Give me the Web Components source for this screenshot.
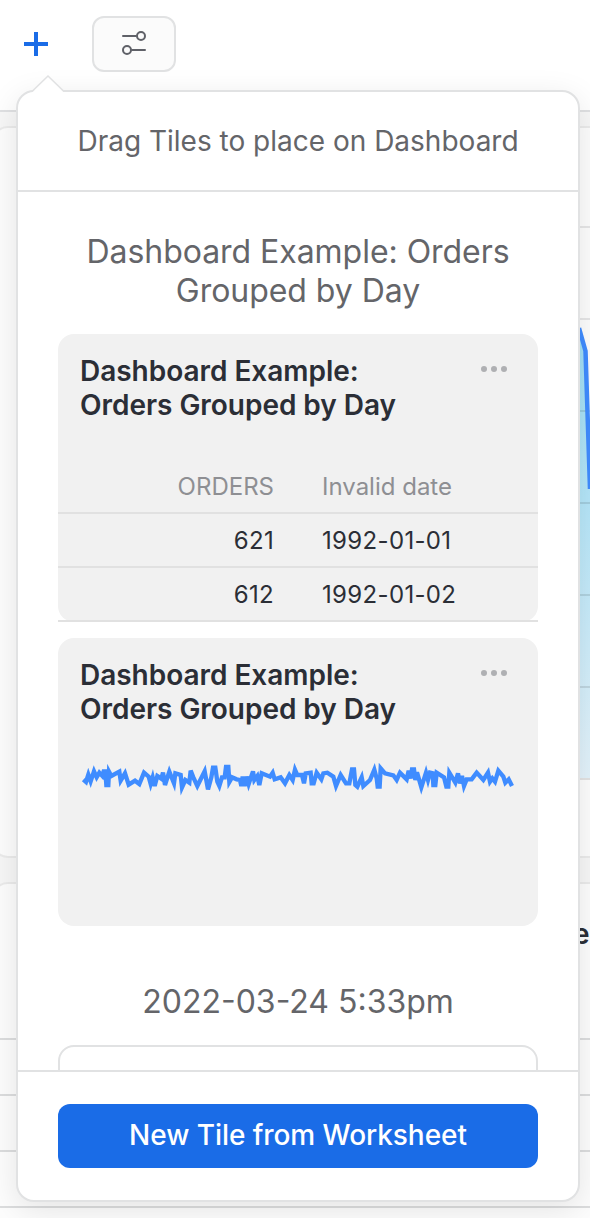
<!DOCTYPE html>
<html lang="en">
<head>
<meta charset="utf-8">
<title>Dashboard</title>
<style>
html,body{margin:0;height:1218px;overflow:hidden;background:#fff}
body{font-family:Inter,"Liberation Sans",sans-serif;color:#2b2e36}
</style>
</head>
<body>
<dash-page>
  <dash-toolbar slot="toolbar"></dash-toolbar>
  <chart-card></chart-card>
  <table-card>e</table-card>
  <tile-popover slot="overlay">
    <span slot="heading">Drag Tiles to place on Dashboard</span>
    <tile-group>
      <span slot="name">Dashboard Example: Orders<br>Grouped by Day</span>
      <dash-tile>
        <span slot="title">Dashboard Example:<br>Orders Grouped by Day</span>
        <mini-table></mini-table>
      </dash-tile>
      <dash-tile>
        <span slot="title">Dashboard Example:<br>Orders Grouped by Day</span>
        <spark-line></spark-line>
      </dash-tile>
    </tile-group>
    <tile-group class="second">
      <span slot="name">2022-03-24 5:33pm</span>
      <empty-tile></empty-tile>
    </tile-group>
    <primary-button slot="footer">New Tile from Worksheet</primary-button>
  </tile-popover>
</dash-page>
<script>
const define = (name, html) => customElements.define(name, class extends HTMLElement {
  constructor() {
    super();
    this.attachShadow({mode: 'open'}).innerHTML = html;
  }
});

define('dash-page', `
<style>
:host{display:flex;flex-direction:column;position:relative;width:590px;height:1218px;overflow:hidden;background:#fff}
main{flex:1;display:flex;flex-direction:column;gap:24px;padding-top:14px;background:#f7f7f7;min-height:0}
</style>
<slot name="toolbar"></slot><main><slot></slot></main><slot name="overlay"></slot>`);

define('dash-toolbar', `
<style>
:host{display:flex;box-sizing:border-box;height:112px;flex:none;border-bottom:2px solid #dfe0e2;padding:16px 0 0 24px;gap:44px;align-items:flex-start}
.add{width:24px;height:24px;margin-top:16px;display:block}
.filter{box-sizing:border-box;width:84px;height:56px;border:2px solid #e1e2e3;border-radius:12px;background:#fbfbfb;display:flex;align-items:center;justify-content:center}
.filter svg{margin-top:-2px}
</style>
<svg class="add" viewBox="0 0 24 24"><path d="M12 0V24M0 12H24" stroke="#1a6ce7" stroke-width="4"/></svg>
<div class="filter"><svg width="24" height="26" viewBox="0 0 24 26" fill="none" stroke="#5f6168" stroke-width="2" stroke-linecap="round"><path d="M1 6H14M10 20H23"/><circle cx="19" cy="6" r="4"/><circle cx="5" cy="20" r="4"/></svg></div>`);

define('chart-card', `
<style>
:host{display:flex;justify-content:flex-end;box-sizing:border-box;height:732px;flex:none;margin:0 -20px 0 -8px;padding-right:18px;border:2px solid #ebebeb;border-radius:16px;background:#fdfdfd}
svg{display:block}
</style>
<svg width="20" height="728" viewBox="570 128 20 728">
<defs><linearGradient id="g" x1="0" y1="328" x2="0" y2="778" gradientUnits="userSpaceOnUse"><stop offset="0" stop-color="#9fdef5"/><stop offset=".38" stop-color="#b5e6f9"/><stop offset="1" stop-color="#e4f3fb"/></linearGradient></defs>
<path d="M570 227H590M570 319H590" stroke="#e6e6e7" stroke-width="2"/>
<path d="M578 778V325L586 350L590 490V778Z" fill="url(#g)"/>
<path d="M570 411H590M570 503H590M570 595H590M570 687H590M570 779H590" stroke="#000" stroke-opacity=".1" stroke-width="2"/>
<path d="M579 328L585.500 351L590 489" fill="none" stroke="#3f8cff" stroke-width="4.500"/>
</svg>`);

define('table-card', `
<style>
:host{display:flex;flex-direction:column;box-sizing:border-box;height:400px;flex:none;margin:0 -20px 0 -8px;border:2px solid #ebebeb;border-radius:16px;background:#fdfdfd}
h2{margin:0;box-sizing:border-box;height:154px;padding:33px 0 0 579px;font-size:28px;line-height:34px;font-weight:600}
i{display:block;box-sizing:border-box;height:56px;border-top:2px solid #dcddde}
</style>
<h2><slot></slot></h2><i></i><i></i><i></i><i></i>`);

define('tile-popover', `
<style>
:host{position:absolute;left:16px;top:90px;width:564px;height:1112px;box-sizing:border-box;border:2px solid #e1e2e3;border-radius:18px;background:#fff;display:flex;flex-direction:column;box-shadow:0 8px 32px rgba(0,0,0,.1)}
.arrow{position:absolute;left:12px;top:-18px}
header{box-sizing:border-box;height:100px;flex:none;border-bottom:2px solid #e1e2e3;text-align:center;font-size:28px;line-height:98px;color:#646569}
main{flex:1;min-height:0;overflow:hidden;padding:40px 40px 0}
footer{box-sizing:border-box;height:130px;flex:none;border-top:2px solid #e1e2e3;padding:32px 40px}
</style>
<svg class="arrow" width="36" height="20" viewBox="0 0 36 20"><path d="M2 18.500L18 2.500L34 18.500V20H2Z" fill="#fff"/><path d="M2 17.500L18 2L34 17.500" fill="none" stroke="#e1e2e3" stroke-width="1.500"/></svg>
<header><slot name="heading"></slot></header><main><slot></slot></main><footer><slot name="footer"></slot></footer>`);

define('tile-group', `
<style>
:host{display:flex;flex-direction:column;gap:16px}
:host(.second){margin-top:56px}
.name{text-align:center;font-size:32px;line-height:39px;letter-spacing:-.04px;color:#646569;margin-bottom:8px}
:host(.second) .name{letter-spacing:0}
</style>
<div class="name"><slot name="name"></slot></div><slot></slot>`);

define('dash-tile', `
<style>
:host{display:flex;flex-direction:column;box-sizing:border-box;height:288px;background:#f1f1f1;border-radius:16px}
.head{display:flex;justify-content:space-between;padding:20px 30px 0 22px;height:102px;flex:none;box-sizing:border-box}
.title{font-size:28px;line-height:34px;font-weight:600;letter-spacing:-.03px;color:#2b2e36}
svg{margin-top:12px}
</style>
<div class="head"><div class="title"><slot name="title"></slot></div>
<svg width="28" height="6" viewBox="0 0 28 6" fill="#afb0b3"><circle cx="4" cy="3" r="3"/><circle cx="14" cy="3" r="3"/><circle cx="24" cy="3" r="3"/></svg></div><slot></slot>`);

define('mini-table', `
<style>
:host{display:block;padding-top:24px;font-size:24px;color:#2b2e36}
.row{display:grid;grid-template-columns:216px 1fr;column-gap:48px;box-sizing:border-box;height:54px;line-height:54px;letter-spacing:.34px;border-bottom:2px solid #e1e1e1}
.row>:first-child{text-align:right}
.h{color:#8e8f93;letter-spacing:0}
</style>
<div class="row h"><span>ORDERS</span><span>Invalid date</span></div>
<div class="row"><span>621</span><span>1992-01-01</span></div>
<div class="row"><span>612</span><span>1992-01-02</span></div>`);

define('spark-line', `
<style>:host{display:block;padding-left:12px}svg{display:block}</style>
<svg width="450" height="70" viewBox="0 0 1350 210"><polyline fill="none" stroke="#3f8cff" stroke-width="13" stroke-miterlimit="4" points="40,119 48,126 55,104 62,124 72,94 80,112 88,98 97,108 101,94 106,94 109,135 115,135 117,95 124,108 148,95 152,122 165,100 176,134 195,122 208,132 222,98 236,110 242,132 248,112 254,138 262,108 274,116 279,98 285,135 298,95 312,130 316,100 332,105 336,142 346,120 358,128 362,92 370,112 382,138 404,94 414,148 424,112 429,83 436,83 442,125 448,138 456,112 464,112 468,81 475,81 478,126 486,112 500,118 510,120 514,138 518,110 524,138 530,110 536,132 549,94 553,120 562,108 568,135 575,100 600,110 608,98 614,118 632,112 645,130 658,105 668,120 675,89 682,105 696,105 702,130 707,100 722,98 725,130 731,130 740,98 754,118 760,100 772,98 790,110 798,138 812,105 828,130 838,130 846,88 852,88 856,135 862,140 875,112 880,138 900,120 913,89 920,115 923,140 929,140 932,85 945,100 970,106 980,120 990,98 1010,118 1016,92 1022,115 1026,88 1032,88 1036,120 1041,97 1054,142 1068,98 1074,120 1080,98 1088,100 1090,135 1096,135 1100,98 1122,112 1129,140 1135,140 1138,98 1156,128 1164,100 1170,130 1176,108 1182,138 1190,118 1205,118 1220,98 1240,120 1254,98 1260,125 1267,115 1275,125 1285,92 1300,110 1306,128 1316,118 1326,138"/></svg>`);

define('empty-tile', `
<style>:host{display:block;box-sizing:border-box;height:288px;border:2px solid #e1e2e3;border-radius:16px}</style>`);

define('primary-button', `
<style>
:host{display:block}
button{display:block;width:100%;height:64px;padding:0 0 2px;border:0;border-radius:12px;background:#1a6ce7;color:#fff;font:500 28px Inter,"Liberation Sans",sans-serif;letter-spacing:-.06px}
</style>
<button><slot></slot></button>`);
</script>
</body>
</html>
